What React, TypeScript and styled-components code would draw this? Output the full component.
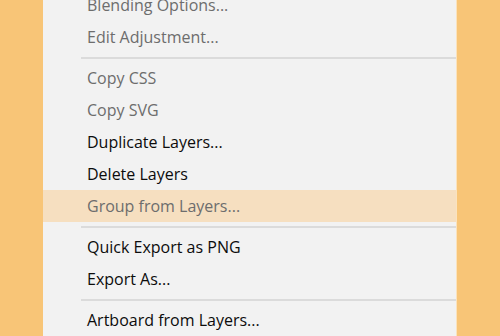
import styled, { createGlobalStyle } from "styled-components";

type Entry =
  | { kind: "item"; label: string; disabled?: boolean; active?: boolean }
  | { kind: "sep" };

const entries: Entry[] = [
  { kind: "item", label: "Blending Options...", disabled: true },
  { kind: "item", label: "Edit Adjustment...", disabled: true },
  { kind: "sep" },
  { kind: "item", label: "Copy CSS", disabled: true },
  { kind: "item", label: "Copy SVG", disabled: true },
  { kind: "item", label: "Duplicate Layers..." },
  { kind: "item", label: "Delete Layers" },
  { kind: "item", label: "Group from Layers...", disabled: true, active: true },
  { kind: "sep" },
  { kind: "item", label: "Quick Export as PNG" },
  { kind: "item", label: "Export As..." },
  { kind: "sep" },
  { kind: "item", label: "Artboard from Layers..." },
];

const GlobalStyle = createGlobalStyle`
  html, body {
    margin: 0;
    padding: 0;
    background: #f8c577;
    overflow: hidden;
  }
`;

const Page = styled.div`
  width: 500px;
  height: 336px;
  overflow: hidden;
  background: #f8c577;
`;

const Menu = styled.div`
  display: flex;
  flex-direction: column;
  margin: -11px 0 0 43px;
  width: 413px;
  background: #f2f2f2;
  border-right: 1px solid #fbe3bd;
`;

const MenuItem = styled.div<{ $disabled?: boolean; $active?: boolean }>`
  height: 32px;
  display: flex;
  align-items: center;
  padding-left: 44px;
  font-family: "Open Sans", "Noto Sans", sans-serif;
  font-size: 16px;
  color: ${(props) => (props.$disabled ? "#6d6d6d" : "#0c0c0c")};
  background: ${(props) => (props.$active ? "#f6dfc0" : "transparent")};
`;

const Separator = styled.div`
  height: 9px;
  display: flex;
  align-items: center;
  padding-left: 38px;

  &::after {
    content: "";
    flex: 1;
    height: 2px;
    background: #dbdbdb;
  }
`;

export default function App() {
  return (
    <>
      <GlobalStyle />
      <Page>
        <Menu>
          {entries.map((entry, i) =>
            entry.kind === "sep" ? (
              <Separator key={i} />
            ) : (
              <MenuItem key={i} $disabled={entry.disabled} $active={entry.active}>
                {entry.label}
              </MenuItem>
            )
          )}
        </Menu>
      </Page>
    </>
  );
}
